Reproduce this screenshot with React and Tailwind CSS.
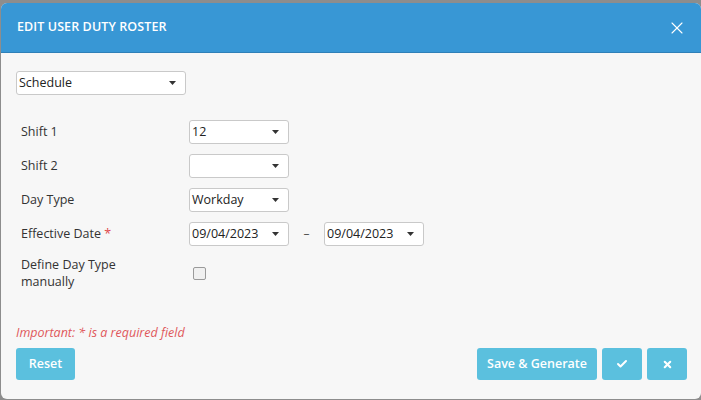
import { Check, X } from 'lucide-react';

const font = { fontFamily: '"Open Sans", "Liberation Sans", sans-serif' };

function Select({ value, className = '' }) {
  return (
    <div
      className={`flex h-[24px] items-center justify-between rounded-[3px] border border-[#c9c9c9] bg-white pl-[2px] pr-[9px] text-[12.5px] text-[#222] ${className}`}
    >
      <span>{value}</span>
      <svg width="7" height="4" viewBox="0 0 7 4">
        <path d="M0 0h7L3.5 4z" fill="#333" />
      </svg>
    </div>
  );
}

function Row({ label, children, required }) {
  return (
    <div className="flex h-[24px] items-center">
      <div className="w-[173px] pl-[5px] text-[12.5px] text-[#333]">
        {label}
        {required && <span className="text-[#e0474c]"> *</span>}
      </div>
      {children}
    </div>
  );
}

export default function App() {
  return (
    <div className="h-[400px] w-[701px] overflow-hidden bg-[#8d8d8d] pl-[1px] pt-[3px]" style={font}>
      <div className="flex h-[396px] w-[700px] flex-col overflow-hidden rounded-[6px] bg-[#f7f7f7]">
        <div className="flex h-[50px] shrink-0 items-center justify-between border-b border-[#2f80b8] bg-[#3897d5] pl-[16px] pr-[14px]">
          <span className="text-[12.5px] font-semibold tracking-[0.1px] text-white">EDIT USER DUTY ROSTER</span>
          <X className="h-[20px] w-[20px] text-white" strokeWidth={1.3} />
        </div>

        <div className="flex flex-1 flex-col pl-[15px] pr-[14px] pt-[18px]">
          <Select value="Schedule" className="w-[170px]" />

          <div className="mt-[25px] flex flex-col gap-[10px]">
            <Row label="Shift 1">
              <Select value="12" className="w-[100px]" />
            </Row>
            <Row label="Shift 2">
              <Select value="" className="w-[100px]" />
            </Row>
            <Row label="Day Type">
              <Select value="Workday" className="w-[100px]" />
            </Row>
            <Row label="Effective Date" required>
              <Select value="09/04/2023" className="w-[100px]" />
              <span className="w-[35px] text-center text-[12px] text-[#555]">–</span>
              <Select value="09/04/2023" className="w-[100px]" />
            </Row>
            <div className="flex items-center">
              <div className="w-[177px] pl-[5px] text-[12.5px] leading-[17px] text-[#333]">
                Define Day Type
                <br />
                manually
              </div>
              <div className="h-[13px] w-[13px] rounded-[2px] border border-[#9a9a9a] bg-[#f0f0f0]" />
            </div>
          </div>

          <div className="mt-[auto] text-[12.5px] italic text-[#e0575b]">Important: * is a required field</div>
          <div className="mb-[19px] mt-[5px] flex items-center justify-between">
            <button className="h-[32px] w-[59px] rounded-[3px] bg-[#5bc0de] text-[12.5px] font-semibold text-white">
              Reset
            </button>
            <div className="flex gap-[5px]">
              <button className="h-[32px] w-[120px] rounded-[3px] bg-[#5bc0de] text-[12.5px] font-semibold text-white">
                Save &amp; Generate
              </button>
              <button className="flex h-[32px] w-[40px] items-center justify-center rounded-[3px] bg-[#5bc0de]">
                <Check className="h-[12px] w-[12px] text-white" strokeWidth={4} />
              </button>
              <button className="flex h-[32px] w-[40px] items-center justify-center rounded-[3px] bg-[#5bc0de]">
                <X className="h-[11px] w-[11px] text-white" strokeWidth={4.5} />
              </button>
            </div>
          </div>
        </div>
      </div>
    </div>
  );
}
